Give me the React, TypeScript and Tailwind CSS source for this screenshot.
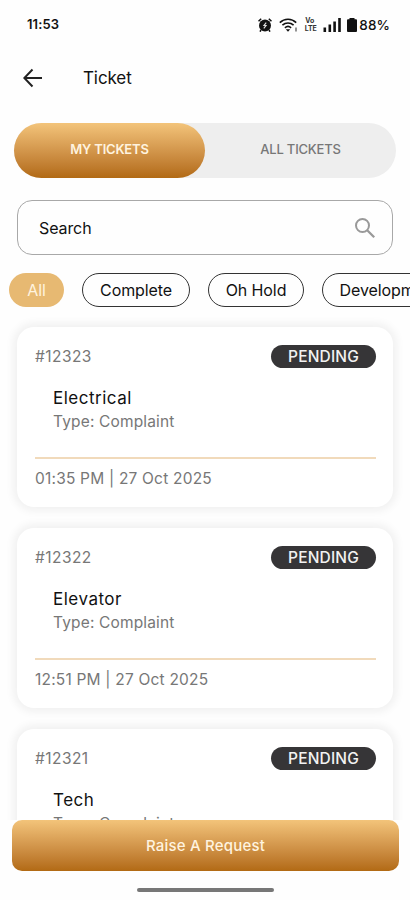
import React, { useState } from "react";

const filters = [
  { label: "All", width: "w-[55px]" },
  { label: "Complete", width: "w-[108px]" },
  { label: "Oh Hold", width: "w-[96px]" },
  { label: "Development", width: "w-[134px]" },
];

const tickets = [
  { id: "#12323", title: "Electrical", type: "Complaint", date: "01:35 PM | 27 Oct 2025" },
  { id: "#12322", title: "Elevator", type: "Complaint", date: "12:51 PM | 27 Oct 2025" },
  { id: "#12321", title: "Tech", type: "Complaint", date: "12:49 PM | 27 Oct 2025" },
];

function StatusBar() {
  return (
    <div className="h-[50px] shrink-0 flex items-center justify-between pl-[27px] pr-[20px] text-[#111]">
      <span className="text-[13px] font-semibold tracking-[0.1px]">11:53</span>
      <div className="flex items-center">
        {/* Alarm */}
        <svg width="14" height="14" viewBox="0 0 14 14" fill="none">
          <circle cx="7" cy="7.5" r="6" fill="#111" />
          <path d="M.5 3.2 3.2.7M13.5 3.2 10.8.7M3 12l-1 1.7M11 12l1 1.7" stroke="#111" strokeWidth="1.5" />
          <path d="M8.2 4.6 6 7.5h2L5.8 10.400" stroke="#ddd" strokeWidth="1.2" />
        </svg>
        {/* Wifi */}
        <svg className="ml-[7px]" width="19" height="14" viewBox="0 0 19 14" fill="none">
          <path d="M.8 4.6C5.4.2 12.6.2 17.2 4.6" stroke="#111" strokeWidth="1.6" />
          <path d="M3.4 7.2c3.3-3 7.900-3 11.200 0" stroke="#111" strokeWidth="1.6" />
          <path d="M5.900 9.800c2-1.800 4.200-1.800 6.200 0" stroke="#111" strokeWidth="1.6" />
          <path d="M6.800 11.200h4.400L9 13.800z" fill="#111" />
          <path d="M17 9.500v4" stroke="#888" strokeWidth="1.8" />
        </svg>
        <div className="ml-[6px] w-[13px] flex flex-col items-center text-[7px] leading-[8px] font-bold text-[#333]">
          <span className="-ml-[2px]">Vo</span>
          <span className="tracking-[-0.1px]">LTE</span>
        </div>
        {/* Signal */}
        <svg className="ml-[6px]" width="18" height="14" viewBox="0 0 18 14" fill="#111">
          <rect x="0.5" y="9.5" width="2.6" height="4.5" />
          <rect x="5.5" y="6.5" width="2.6" height="7.5" />
          <rect x="10.3" y="3.5" width="2.6" height="10.5" />
          <rect x="15.2" y="0" width="2.6" height="14" />
        </svg>
        {/* Battery */}
        <svg className="ml-[6px]" width="10" height="14" viewBox="0 0 10 14" fill="#111">
          <rect x="2.5" y="0" width="5" height="2" />
          <rect x="0" y="1.2" width="10" height="12.8" rx="1" />
        </svg>
        <span className="ml-[2px] pt-px text-[13.5px] tracking-[0.1px] font-medium">88%</span>
      </div>
    </div>
  );
}

function TicketCard({ ticket }: { ticket: (typeof tickets)[number] }) {
  return (
    <div className="h-[180px] shrink-0 rounded-[17px] bg-white pt-[18px] pl-[18px] pr-[17px] shadow-[0_0_9px_4px_rgba(0,0,0,0.055)]">
      <div className="flex items-center justify-between h-[23px]">
        <span className="text-[15.5px] tracking-[0.45px] text-[#777]">{ticket.id}</span>
        <span className="w-[105px] h-[23px] rounded-full bg-[#363537] flex items-center justify-center text-[15.5px] tracking-[0.15px] font-medium text-[#f2f2f2]">
          PENDING
        </span>
      </div>
      <div className="pl-[18px] mt-[18px] h-[71px]">
        <p className="text-[17px] leading-[24px] tracking-[0.5px] text-[#111]">{ticket.title}</p>
        <p className="text-[15.5px] leading-[24px] tracking-[0.15px] text-[#777]">Type: {ticket.type}</p>
      </div>
      <div className="h-[2px] bg-[#f1dabb]" />
      <p className="mt-[8px] text-[15.5px] leading-[24px] tracking-[0.2px] text-[#777]">{ticket.date}</p>
    </div>
  );
}

export default function App() {
  const [tab, setTab] = useState("my");
  const [filter, setFilter] = useState("All");

  return (
    <div className="w-full h-[900px] bg-[#fefefe] flex flex-col overflow-hidden font-['Inter',sans-serif]">
      <StatusBar />

      {/* Header */}
      <div className="h-[56px] shrink-0 flex items-center pl-[23px]">
        <button type="button" aria-label="Back">
          <svg width="20" height="20" viewBox="0 0 20 20" fill="none" stroke="#222" strokeWidth="2">
            <path d="M19 10H1.5M9.5 1.500 1.300 10l8.200 8.500" />
          </svg>
        </button>
        <h1 className="ml-[40px] pt-[2px] text-[17px] tracking-[-0.1px] text-[#111]">Ticket</h1>
      </div>

      {/* Tabs */}
      <div className="mt-[17px] mx-[14px] h-[55px] shrink-0 flex rounded-full bg-[#eeeeee] text-[13px] tracking-[-0.2px]">
        <button
          type="button"
          onClick={() => setTab("my")}
          className={`w-1/2 rounded-full pb-[2px] font-semibold ${tab === "my" ? "bg-linear-to-b from-[#f3c47a] to-[#b26a13] text-[#fff3df]" : "text-[#777]"}`}
        >
          MY TICKETS
        </button>
        <button
          type="button"
          onClick={() => setTab("all")}
          className={`w-1/2 rounded-full pb-[2px] font-medium ${tab === "all" ? "bg-linear-to-b from-[#f3c47a] to-[#b26a13] text-[#fff3df]" : "text-[#777]"}`}
        >
          ALL TICKETS
        </button>
      </div>

      {/* Search */}
      <div className="mt-[22px] mx-[17px] h-[55px] shrink-0 flex items-center justify-between rounded-[15px] border border-[#a8a8a8] pl-[21px] pr-[16px]">
        <input
          type="text"
          placeholder="Search"
          className="w-48 bg-transparent text-[16px] tracking-[-0.1px] placeholder-[#111] focus:outline-none"
        />
        <svg width="22" height="22" viewBox="0 0 22 22" fill="none" stroke="#999" strokeWidth="2">
          <circle cx="8.5" cy="8.5" r="6.5" />
          <path d="m13.2 13.2 7 7" strokeWidth="2.3" />
        </svg>
      </div>

      {/* Filters */}
      <div className="mt-[18px] pl-[9px] h-[34px] shrink-0 flex gap-[18px] overflow-hidden">
        {filters.map((f) => (
          <button
            key={f.label}
            type="button"
            onClick={() => setFilter(f.label)}
            className={`${f.width} h-[34px] shrink-0 rounded-full text-[16px] tracking-[-0.1px] ${
              filter === f.label ? "bg-[#e7b972] text-[#fff3df]" : "border border-[#333] text-[#111]"
            }`}
          >
            {f.label}
          </button>
        ))}
      </div>

      {/* Ticket list */}
      <div className="flex-1 min-h-0 overflow-hidden flex flex-col gap-[21px] pt-[20px] px-[17px]">
        {tickets.map((t) => (
          <TicketCard key={t.id} ticket={t} />
        ))}
      </div>

      <button
        type="button"
        className="ml-[12px] mr-[11px] pt-[2px] h-[51px] shrink-0 rounded-[10px] bg-linear-to-b from-[#f3c47a] to-[#b26a13] text-[15px] tracking-[0.2px] font-medium text-[#fff3df]"
      >
        Raise A Request
      </button>
      <div className="h-[29px] shrink-0 flex justify-center pt-[17px]">
        <div className="w-[137px] h-[4px] rounded-full bg-[#777]" />
      </div>
    </div>
  );
}
